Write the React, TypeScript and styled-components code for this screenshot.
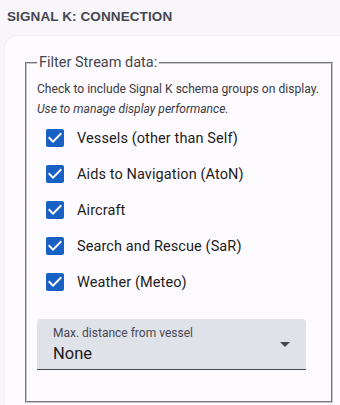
import * as React from "react"
import styled, { createGlobalStyle } from "styled-components"

const GlobalStyle = createGlobalStyle`
  html, body {
    margin: 0;
    padding: 0;
    background: #f8f5fb;
    font-family: Roboto, "Liberation Sans", sans-serif;
  }
`

const streamGroups = [
    'Vessels (other than Self)',
    'Aids to Navigation (AtoN)',
    'Aircraft',
    'Search and Rescue (SaR)',
    'Weather (Meteo)',
]

const Page = styled.div`
  width: 340px;
  height: 405px;
  overflow: hidden;
`

const SectionTitle = styled.div`
  padding: 8px 7px 10px;
  font-family: "Liberation Sans", Arial, sans-serif;
  font-weight: bold;
  font-size: 13.5px;
  line-height: 18px;
  color: #45464f;
  letter-spacing: 0.1px;
`

const Card = styled.div`
  margin-left: 5px;
  width: 360px;
  padding: 17px 0 30px 20px;
  box-sizing: border-box;
  background: #fdfbff;
  border-radius: 12px;
  box-shadow: 0 0 2px rgba(120, 110, 140, 0.18);
`

const Fieldset = styled.fieldset`
  margin: 0;
  width: 308px;
  box-sizing: border-box;
  padding: 6px 10px 31px;
  border: 2px groove #c8c6cc;
`

const Legend = styled.legend`
  padding: 0 2px;
  font-size: 14.5px;
  line-height: 20px;
  color: #46464c;
`

const Hint = styled.div<{ $italic?: boolean }>`
  font-size: 12.1px;
  line-height: 20px;
  color: #3a3a3f;
  font-style: ${props => props.$italic ? 'italic' : 'normal'};
`

const GroupList = styled.div`
  display: flex;
  flex-direction: column;
  padding-top: 1px;
`

const CheckRow = styled.label`
  display: flex;
  align-items: center;
  height: 36px;
  padding-left: 6px;
  cursor: pointer;
`

const CheckIcon = styled.svg`
  width: 24px;
  height: 24px;
  flex: none;
  fill: #1661c3;
`

const CheckLabel = styled.span`
  margin-left: 10px;
  font-size: 14.5px;
  color: #1d1b20;
  letter-spacing: 0.1px;
`

const SelectField = styled.div`
  position: relative;
  margin-top: 19px;
  width: 269px;
  height: 51px;
  box-sizing: border-box;
  padding: 7px 16px 0;
  background: #e0e2ea;
  border-radius: 4px 4px 0 0;
  border-bottom: 1px solid #44474e;
`

const SelectLabel = styled.div`
  font-size: 12px;
  line-height: 14px;
  color: #46474f;
`

const SelectValue = styled.div`
  margin-top: 3px;
  font-size: 16.5px;
  line-height: 22px;
  color: #1d1b20;
`

const DropArrow = styled.svg`
  position: absolute;
  right: 9px;
  top: 13px;
  width: 24px;
  height: 24px;
  fill: #44474e;
`

const CheckboxItem = ({ title }: { title: string }) => {
    const [checked, setChecked] = React.useState(true)
    return (
        <CheckRow onClick={() => setChecked(!checked)}>
            <CheckIcon viewBox="0 0 24 24">
                {checked
                    ? <path d="M19 3H5c-1.11 0-2 .9-2 2v14c0 1.1.89 2 2 2h14c1.11 0 2-.9 2-2V5c0-1.1-.89-2-2-2zm-9 14l-5-5 1.41-1.41L10 14.17l7.59-7.59L19 8l-9 9z" />
                    : <path d="M19 5v14H5V5h14m0-2H5c-1.1 0-2 .9-2 2v14c0 1.1.9 2 2 2h14c1.1 0 2-.9 2-2V5c0-1.1-.9-2-2-2z" />}
            </CheckIcon>
            <CheckLabel>{title}</CheckLabel>
        </CheckRow>
    )
}

const App = () => {
    return (
        <Page>
            <GlobalStyle />
            <SectionTitle>SIGNAL K: CONNECTION</SectionTitle>
            <Card>
                <Fieldset>
                    <Legend>Filter Stream data:</Legend>
                    <Hint>Check to include Signal K schema groups on display.</Hint>
                    <Hint $italic>Use to manage display performance.</Hint>
                    <GroupList>
                        {streamGroups.map(title => (
                            <CheckboxItem key={title} title={title} />
                        ))}
                    </GroupList>
                    <SelectField>
                        <SelectLabel>Max. distance from vessel</SelectLabel>
                        <SelectValue>None</SelectValue>
                        <DropArrow viewBox="0 0 24 24"><path d="M7 10l5 5 5-5z" /></DropArrow>
                    </SelectField>
                </Fieldset>
            </Card>
        </Page>
    )
}

export default App
